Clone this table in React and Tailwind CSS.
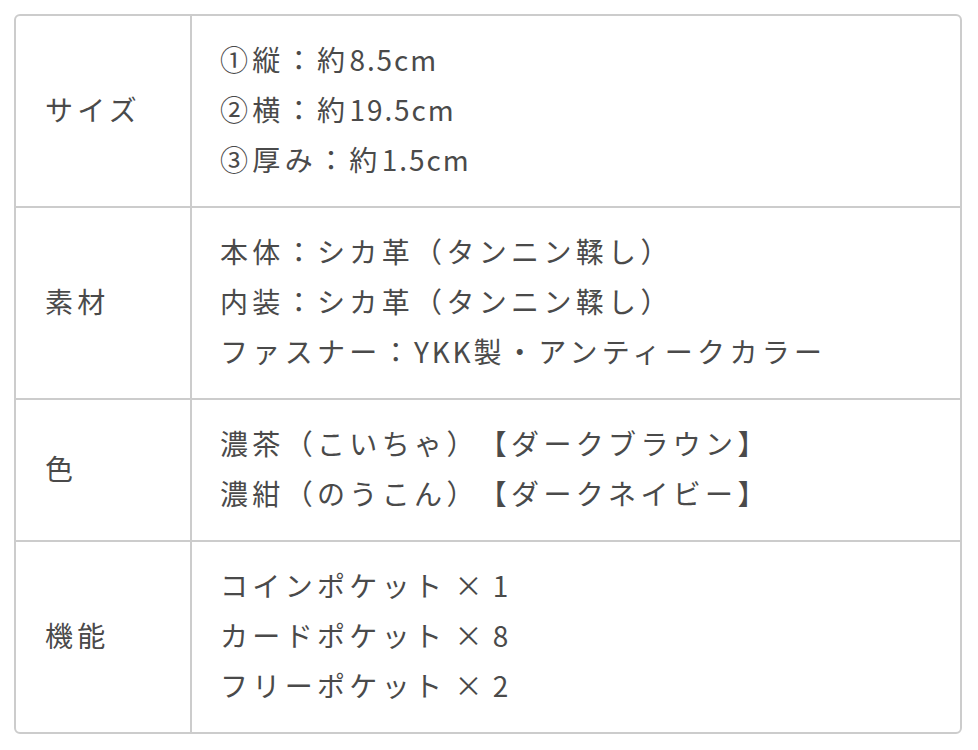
import React from "react";

// latin runs keep tighter tracking than the kana/kanji around them
const L = ({ children }) => <span className="tracking-[0.07em]">{children}</span>;

const rows = [
  {
    label: "サイズ",
    lines: [
      <>①縦：約<L>8.5cm</L></>,
      <>②横：約<L>19.5cm</L></>,
      <>③厚み：約<L>1.5cm</L></>,
    ],
  },
  {
    label: "素材",
    lines: [
      <>本体：シカ革（タンニン鞣し）</>,
      <>内装：シカ革（タンニン鞣し）</>,
      <>ファスナー：<span className="tracking-[0.1em]">YKK</span>製・アンティークカラー</>,
    ],
  },
  {
    label: "色",
    lines: [<>濃茶（こいちゃ）【ダークブラウン】</>, <>濃紺（のうこん）【ダークネイビー】</>],
  },
  {
    label: "機能",
    lines: [
      <>コインポケット<L> × 1</L></>,
      <>カードポケット<L> × 8</L></>,
      <>フリーポケット<L> × 2</L></>,
    ],
  },
];

export default function App() {
  return (
    <div className="min-h-[750px] bg-white pt-[14px] pl-[14px]">
      <div
        className="w-[948px] rounded-md border-2 border-[#cccccc] overflow-hidden text-[#4a4a4a] text-[28px] tracking-[0.155em] leading-[50px] [text-spacing-trim:space-all]"
        style={{ fontFamily: '"Noto Sans CJK JP", "Noto Sans", sans-serif' }}
      >
        {rows.map((r, i) => (
          <div
            key={r.label}
            className={`grid grid-cols-[176px_1fr] ${i > 0 ? "border-t-2 border-[#cccccc]" : ""}`}
          >
            <div className="flex items-center border-r-2 border-[#cccccc] pl-[29px] pb-1">{r.label}</div>
            <div className="pt-[18px] pb-[22px] pl-7">
              {r.lines.map((l, j) => (
                <div key={j}>{l}</div>
              ))}
            </div>
          </div>
        ))}
      </div>
    </div>
  );
}
